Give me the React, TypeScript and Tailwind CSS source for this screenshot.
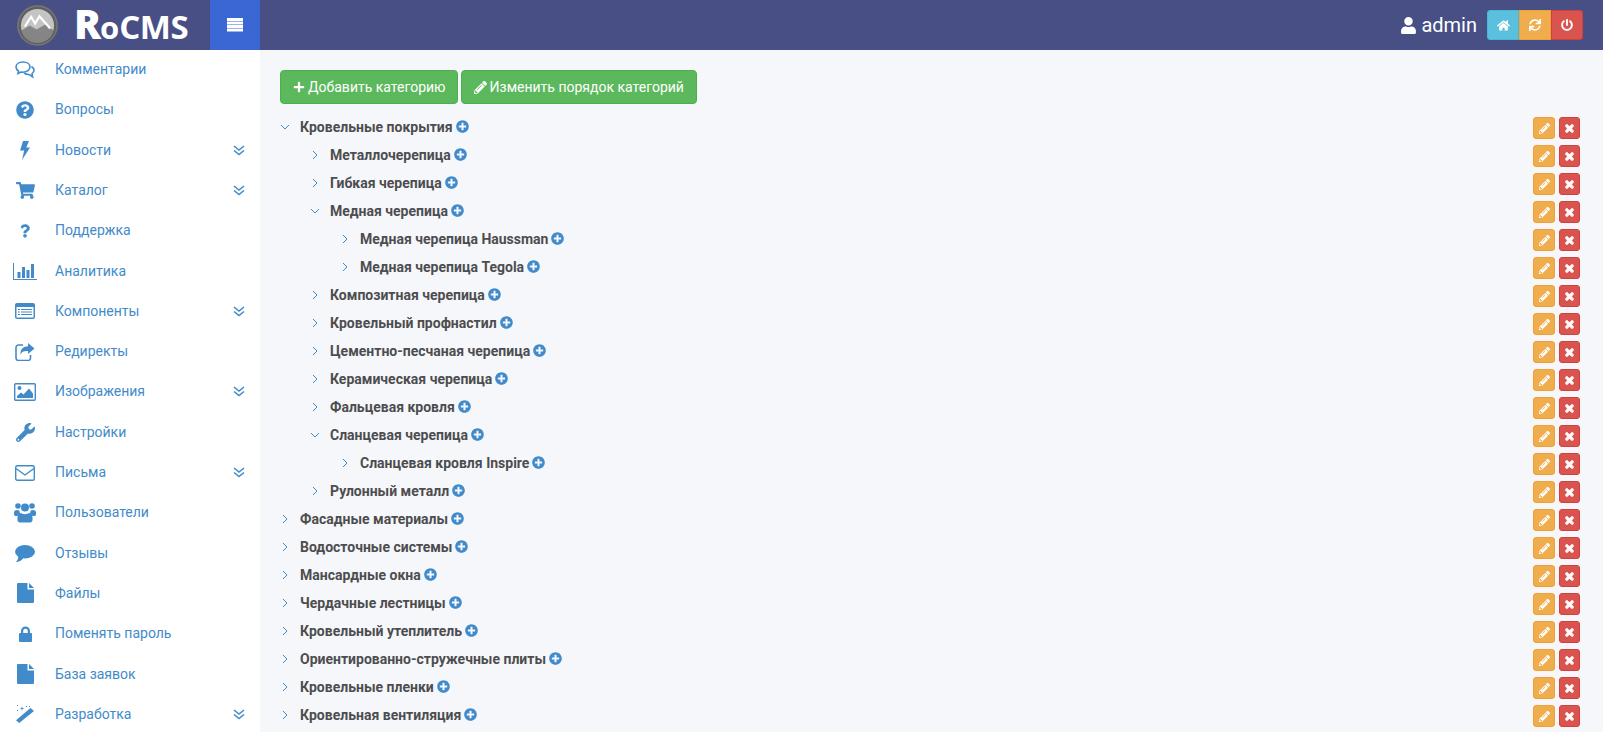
import React from "react";
import {
  FaQuestionCircle, FaShoppingCart, FaQuestion, FaWrench, FaUser, FaHome, FaSync, FaPowerOff,
  FaPlusCircle, FaPencilAlt, FaTimes, FaPlus,
} from "react-icons/fa";

type IC = { className?: string };

const Comments = ({ className }: IC) => (
  <svg viewBox="0 0 20 18" className={className} fill="none" stroke="currentColor" strokeWidth="1.6">
    <path d="M8 1C4 1 1 3 1 6c0 1.600 1 3 2.500 4L3 12.500 6 11c.7.1 1.300.2 2 .2 4 0 7-2.300 7-5.200S12 1 8 1z" />
    <path d="M16.500 5.500C18 6.500 19 7.800 19 9.300c0 1.300-.8 2.500-2 3.300l.6 3.200-3.400-2.300c-2 .1-3.800-.3-5-1.300" />
  </svg>
);
const Bolt = ({ className }: IC) => (
  <svg viewBox="0 0 10 19" className={className} fill="currentColor"><path d="M3 0h6L6.300 6.500H10L2 19l2.200-9.500H0z" /></svg>
);
const BarChart = ({ className }: IC) => (
  <svg viewBox="0 0 24 17" className={className} fill="currentColor">
    <path d="M0 0h1v16h23v1H0z" />
    <rect x="4.500" y="9" width="3" height="6" />
    <rect x="9" y="4" width="3" height="11" />
    <rect x="13.500" y="7" width="3" height="8" />
    <rect x="18" y="1" width="3" height="14" />
  </svg>
);
const ListAlt = ({ className }: IC) => (
  <svg viewBox="0 0 20 16" className={className}>
    <rect width="20" height="16" rx="2" fill="currentColor" />
    <rect x="1.500" y="4" width="17" height="10.500" fill="#fff" />
    <path d="M3 6h2v1H3zM6 6h11v1H6zM3 8.500h2v1H3zM6 8.500h11v1H6zM3 11h2v1H3zM6 11h11v1H6z" fill="currentColor" />
  </svg>
);
const Share = ({ className }: IC) => (
  <svg viewBox="0 0 20 18" className={className} fill="currentColor">
    <path d="M13 0l6.500 5.500L13 11V8C9 8 6.500 8.500 5.500 12 5 7 7.500 3.500 13 3.300z" />
    <path d="M8 2H3.500A2.500 2.500 0 0 0 1 4.500v10.500A2.500 2.500 0 0 0 3.500 17.500H13a2.500 2.500 0 0 0 2.500-2.500v-3" fill="none" stroke="currentColor" strokeWidth="1.600" />
  </svg>
);
const Picture = ({ className }: IC) => (
  <svg viewBox="0 0 22 18" className={className} fill="currentColor">
    <rect x=".7" y=".7" width="20.600" height="16.600" rx="1" fill="none" stroke="currentColor" strokeWidth="1.400" />
    <circle cx="5.500" cy="5" r="2" />
    <path d="M3 15v-2l4-3.500 2.500 2 5.500-6 4 5V15z" />
  </svg>
);
const Envelope = ({ className }: IC) => (
  <svg viewBox="0 0 20 16" className={className} fill="none" stroke="currentColor" strokeWidth="1.400">
    <rect x=".7" y=".7" width="18.600" height="14.600" rx="1.500" />
    <path d="M1 3.500l9 6.500 9-6.500" />
  </svg>
);
const Users = ({ className }: IC) => (
  <svg viewBox="0 0 22 20" className={className} fill="currentColor">
    <circle cx="4" cy="3" r="2.800" /><circle cx="18" cy="3" r="2.800" /><circle cx="11" cy="4.500" r="4" />
    <path d="M0 9.500C0 7.800 1.500 7 3 7c1 0 2 .2 2.600.8-.4 1.200.3 2 1 2.700C5 11.200 4 12 3.600 13H1.500C.5 13 0 12 0 11zM22 9.500C22 7.800 20.500 7 19 7c-1 0-2 .2-2.600.8.4 1.200-.3 2-1 2.700 1.600.7 2.600 1.500 3 2.500h2.100c1 0 1.500-1 1.500-2z" />
    <path d="M7 10c1 .8 2.500 1.200 4 1.200s3-.4 4-1.200c2 .2 3.500 1.800 3.500 4.500v2.500c0 1.500-1 2.500-2.500 2.500H6c-1.500 0-2.500-1-2.500-2.500v-2.500C3.500 11.800 5 10.200 7 10z" />
  </svg>
);
const Comment = ({ className }: IC) => (
  <svg viewBox="0 0 20 17" className={className} fill="currentColor">
    <ellipse cx="10" cy="6.800" rx="10" ry="6.800" />
    <path d="M3.500 10.500C3.500 13 2.500 15.500.8 17c3 0 6-1.500 7.500-4z" />
  </svg>
);
const FileI = ({ className }: IC) => (
  <svg viewBox="0 0 17 20" className={className} fill="currentColor">
    <path d="M0 1a1 1 0 0 1 1-1h9.500v6.500H17V19a1 1 0 0 1-1 1H1a1 1 0 0 1-1-1z" />
    <path d="M12 0l5 5h-5z" />
  </svg>
);
const Lock = ({ className }: IC) => (
  <svg viewBox="0 0 13 16" className={className} fill="currentColor">
    <path d="M2 7V5a4.500 4.500 0 0 1 9 0v2h1a1 1 0 0 1 1 1v7a1 1 0 0 1-1 1H1a1 1 0 0 1-1-1V8a1 1 0 0 1 1-1zm2.200 0h4.600V5a2.300 2.300 0 0 0-4.600 0z" />
  </svg>
);
const Wand = ({ className }: IC) => (
  <svg viewBox="0 0 18 18" className={className} fill="currentColor">
    <path d="M14.500 3l3.500 3L3.200 18 0 15.200z" />
    <path d="M6 1l.5 2 2 .5-2 .5L6 6l-.5-2-2-.5 2-.5zM1 0h1v1H1zM1 5h1v1H1zM10 1h1v1h-1zM13 1h1v1h-1z" />
  </svg>
);
const DoubleDown = ({ className }: IC) => (
  <svg viewBox="0 0 12 11" className={className} fill="none" stroke="currentColor" strokeWidth="1.600">
    <path d="M1 1l5 4 5-4M1 5.500l5 4 5-4" />
  </svg>
);

const menu: [string, React.ComponentType<IC>, string, boolean][] = [
  ["Комментарии", Comments, "w-[20px] h-[18px]", false],
  ["Вопросы", FaQuestionCircle, "w-[18px] h-[18px]", false],
  ["Новости", Bolt, "w-[10px] h-[19px]", true],
  ["Каталог", FaShoppingCart, "w-[19px] h-[17px]", true],
  ["Поддержка", FaQuestion, "w-[10px] h-[14px]", false],
  ["Аналитика", BarChart, "w-[24px] h-[17px]", false],
  ["Компоненты", ListAlt, "w-[20px] h-[16px]", true],
  ["Редиректы", Share, "w-[20px] h-[18px]", false],
  ["Изображения", Picture, "w-[22px] h-[18px]", true],
  ["Настройки", FaWrench, "w-[19px] h-[19px]", false],
  ["Письма", Envelope, "w-[20px] h-[16px]", true],
  ["Пользователи", Users, "w-[22px] h-[20px]", false],
  ["Отзывы", Comment, "w-[20px] h-[17px]", false],
  ["Файлы", FileI, "w-[17px] h-[20px]", false],
  ["Поменять пароль", Lock, "w-[13px] h-[16px]", false],
  ["База заявок", FileI, "w-[17px] h-[20px]", false],
  ["Разработка", Wand, "w-[18px] h-[18px]", true],
];

const tree: [string, number, boolean][] = [
  ["Кровельные покрытия", 0, true],
  ["Металлочерепица", 1, false],
  ["Гибкая черепица", 1, false],
  ["Медная черепица", 1, true],
  ["Медная черепица Haussman", 2, false],
  ["Медная черепица Tegola", 2, false],
  ["Композитная черепица", 1, false],
  ["Кровельный профнастил", 1, false],
  ["Цементно-песчаная черепица", 1, false],
  ["Керамическая черепица", 1, false],
  ["Фальцевая кровля", 1, false],
  ["Сланцевая черепица", 1, true],
  ["Сланцевая кровля Inspire", 2, false],
  ["Рулонный металл", 1, false],
  ["Фасадные материалы", 0, false],
  ["Водосточные системы", 0, false],
  ["Мансардные окна", 0, false],
  ["Чердачные лестницы", 0, false],
  ["Кровельный утеплитель", 0, false],
  ["Ориентированно-стружечные плиты", 0, false],
  ["Кровельные пленки", 0, false],
  ["Кровельная вентиляция", 0, false],
];

const indent = ["pl-0", "pl-[30px]", "pl-[60px]"];

export default function App() {
  return (
    <div className="h-screen w-full overflow-hidden bg-white font-['Roboto',sans-serif]">
      <div className="w-[1603px] h-full flex flex-col bg-[#f5f7fb]">
        <header className="relative z-10 h-[50px] shrink-0 bg-[#474f85] flex items-center text-white">
          <div className="w-[210px] h-full flex items-center pl-[17px]">
            <svg viewBox="0 0 42 42" className="w-[41px] h-[41px] shrink-0">
              <circle cx="21" cy="21" r="20" fill="#5f5f5f" stroke="#777" strokeWidth="1.500" />
              <circle cx="21" cy="21" r="17" fill="#c4c4c4" />
              <path d="M4.500 26 L13 21 L20 25 L29 20 L37.500 26 A17 17 0 0 1 4.500 26Z" fill="#858585" />
              <path d="M8 22 L14.500 12 L18.500 19 L23 11.500 L34 24" fill="none" stroke="#fff" strokeWidth="2.200" />
            </svg>
            <div className="ml-[16px] font-['Open_Sans',sans-serif] font-bold leading-[44px] flex items-baseline whitespace-nowrap">
              <span className="text-[40px] font-extrabold tracking-[-1px]">R</span><span className="text-[31px]">o</span><span className="text-[33px] tracking-[-0.5px]">CMS</span>
            </div>
          </div>
          <div className="w-[50px] h-full bg-[#3a67d3] flex items-center justify-center">
            <svg viewBox="0 0 16 14" className="w-[16px] h-[14px]" fill="#fff">
              <rect x="0" y="0" width="16" height="3" /><rect x="0" y="3.500" width="16" height="3" />
              <rect x="0" y="7" width="16" height="3" /><rect x="0" y="10.500" width="16" height="3" />
            </svg>
          </div>
          <div className="ml-auto flex items-center pr-[20px]">
            <FaUser className="w-[15px] h-[17px]" />
            <span className="ml-[5px] text-[20px] mr-[10px]">admin</span>
            <div className="flex h-[30px]">
              <button className="w-[32px] rounded-l-[3px] bg-[#5bc0de] border border-[#46b8da] flex items-center justify-center"><FaHome className="w-[13px] h-[13px]" /></button>
              <button className="w-[32px] bg-[#f0ad4e] border border-[#eea236] flex items-center justify-center"><FaSync className="w-[12px] h-[12px]" /></button>
              <button className="w-[32px] rounded-r-[3px] bg-[#d9534f] border border-[#d43f3a] flex items-center justify-center"><FaPowerOff className="w-[12px] h-[12px]" /></button>
            </div>
          </div>
        </header>
        <div className="flex flex-1 min-h-0">
          <aside className="w-[260px] shrink-0 bg-white">
            <div className="-mt-[0.6px]">
              {menu.map(([label, Icon, size, more]) => (
                <div key={label} className="h-[40.3px] flex items-center text-[14px] text-[#428bca]">
                  <div className="w-[55px] pl-[12px] shrink-0"><span className="w-[26px] flex justify-center"><Icon className={size} /></span></div>
                  <span>{label}</span>
                  {more && <DoubleDown className="ml-auto mr-[15px] w-[12px] h-[11px]" />}
                </div>
              ))}
            </div>
          </aside>
          <main className="flex-1 min-w-0 pt-[20px] pl-[20px] pr-[23px]">
            <div className="flex gap-[3px] mb-[9px]">
              <button className="h-[34px] pl-[12px] pr-[11px] rounded-[4px] bg-[#5cb85c] border border-[#4cae4c] text-white text-[14px] flex items-center gap-[3px]"><FaPlus className="w-[12px] h-[12px]" />Добавить категорию</button>
              <button className="h-[34px] pl-[12px] pr-[12px] rounded-[4px] bg-[#5cb85c] border border-[#4cae4c] text-white text-[14px] flex items-center gap-[3px]"><FaPencilAlt className="w-[13px] h-[13px]" />Изменить порядок категорий</button>
            </div>
            {tree.map(([label, level, open]) => (
              <div key={label} className={`h-[28px] flex items-center ${indent[level]}`}>
                <span className="w-[20px] flex justify-start text-[#428bca]">
                  <svg viewBox="0 0 10 10" className="w-[10px] h-[10px]" fill="none" stroke="currentColor" strokeWidth="1">
                    {open ? <path d="M1 3 L5 7 L9 3" /> : <path d="M3 1 L7 5 L3 9" />}
                  </svg>
                </span>
                <span className="text-[14px] font-bold text-[#4d4d4f]">{label}</span>
                <FaPlusCircle className="ml-[3px] mb-[2px] w-[13px] h-[13px] text-[#428bca]" />
                <div className="ml-auto mt-[2px] flex gap-[4px]">
                  <button className="w-[22px] h-[22px] rounded-[3px] bg-[#f0ad4e] border border-[#eea236] flex items-center justify-center text-white"><FaPencilAlt className="w-[11px] h-[11px]" /></button>
                  <button className="w-[21px] h-[22px] rounded-[3px] bg-[#d9534f] border border-[#d43f3a] flex items-center justify-center text-white"><FaTimes className="w-[11px] h-[11px]" stroke="currentColor" strokeWidth="50" /></button>
                </div>
              </div>
            ))}
          </main>
        </div>
      </div>
    </div>
  );
}
